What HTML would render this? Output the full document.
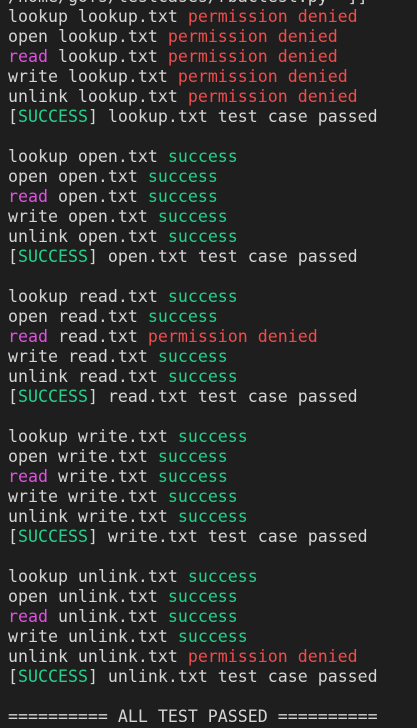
<!DOCTYPE html>
<html><head><meta charset="utf-8"><style>
html,body{margin:0;padding:0;background:#1e1e1e;width:417px;height:728px;overflow:hidden}
pre{margin:0;position:absolute;top:-13px;left:8px;font-family:"DejaVu Sans Mono","Liberation Mono",monospace;font-size:16.6px;line-height:20px;color:#d4d4d4}
.r{color:#f14c4c}.g{color:#23d18b}.m{color:#e052e0}
</style></head><body><pre>/home/gofs/testcases/rbactest.py" ]]
lookup lookup.txt <span class="r">permission denied</span>
open lookup.txt <span class="r">permission denied</span>
<span class="m">read</span> lookup.txt <span class="r">permission denied</span>
write lookup.txt <span class="r">permission denied</span>
unlink lookup.txt <span class="r">permission denied</span>
[<span class="g">SUCCESS</span>] lookup.txt test case passed

lookup open.txt <span class="g">success</span>
open open.txt <span class="g">success</span>
<span class="m">read</span> open.txt <span class="g">success</span>
write open.txt <span class="g">success</span>
unlink open.txt <span class="g">success</span>
[<span class="g">SUCCESS</span>] open.txt test case passed

lookup read.txt <span class="g">success</span>
open read.txt <span class="g">success</span>
<span class="m">read</span> read.txt <span class="r">permission denied</span>
write read.txt <span class="g">success</span>
unlink read.txt <span class="g">success</span>
[<span class="g">SUCCESS</span>] read.txt test case passed

lookup write.txt <span class="g">success</span>
open write.txt <span class="g">success</span>
<span class="m">read</span> write.txt <span class="g">success</span>
write write.txt <span class="g">success</span>
unlink write.txt <span class="g">success</span>
[<span class="g">SUCCESS</span>] write.txt test case passed

lookup unlink.txt <span class="g">success</span>
open unlink.txt <span class="g">success</span>
<span class="m">read</span> unlink.txt <span class="g">success</span>
write unlink.txt <span class="g">success</span>
unlink unlink.txt <span class="r">permission denied</span>
[<span class="g">SUCCESS</span>] unlink.txt test case passed

========== ALL TEST PASSED ==========</pre></body></html>
